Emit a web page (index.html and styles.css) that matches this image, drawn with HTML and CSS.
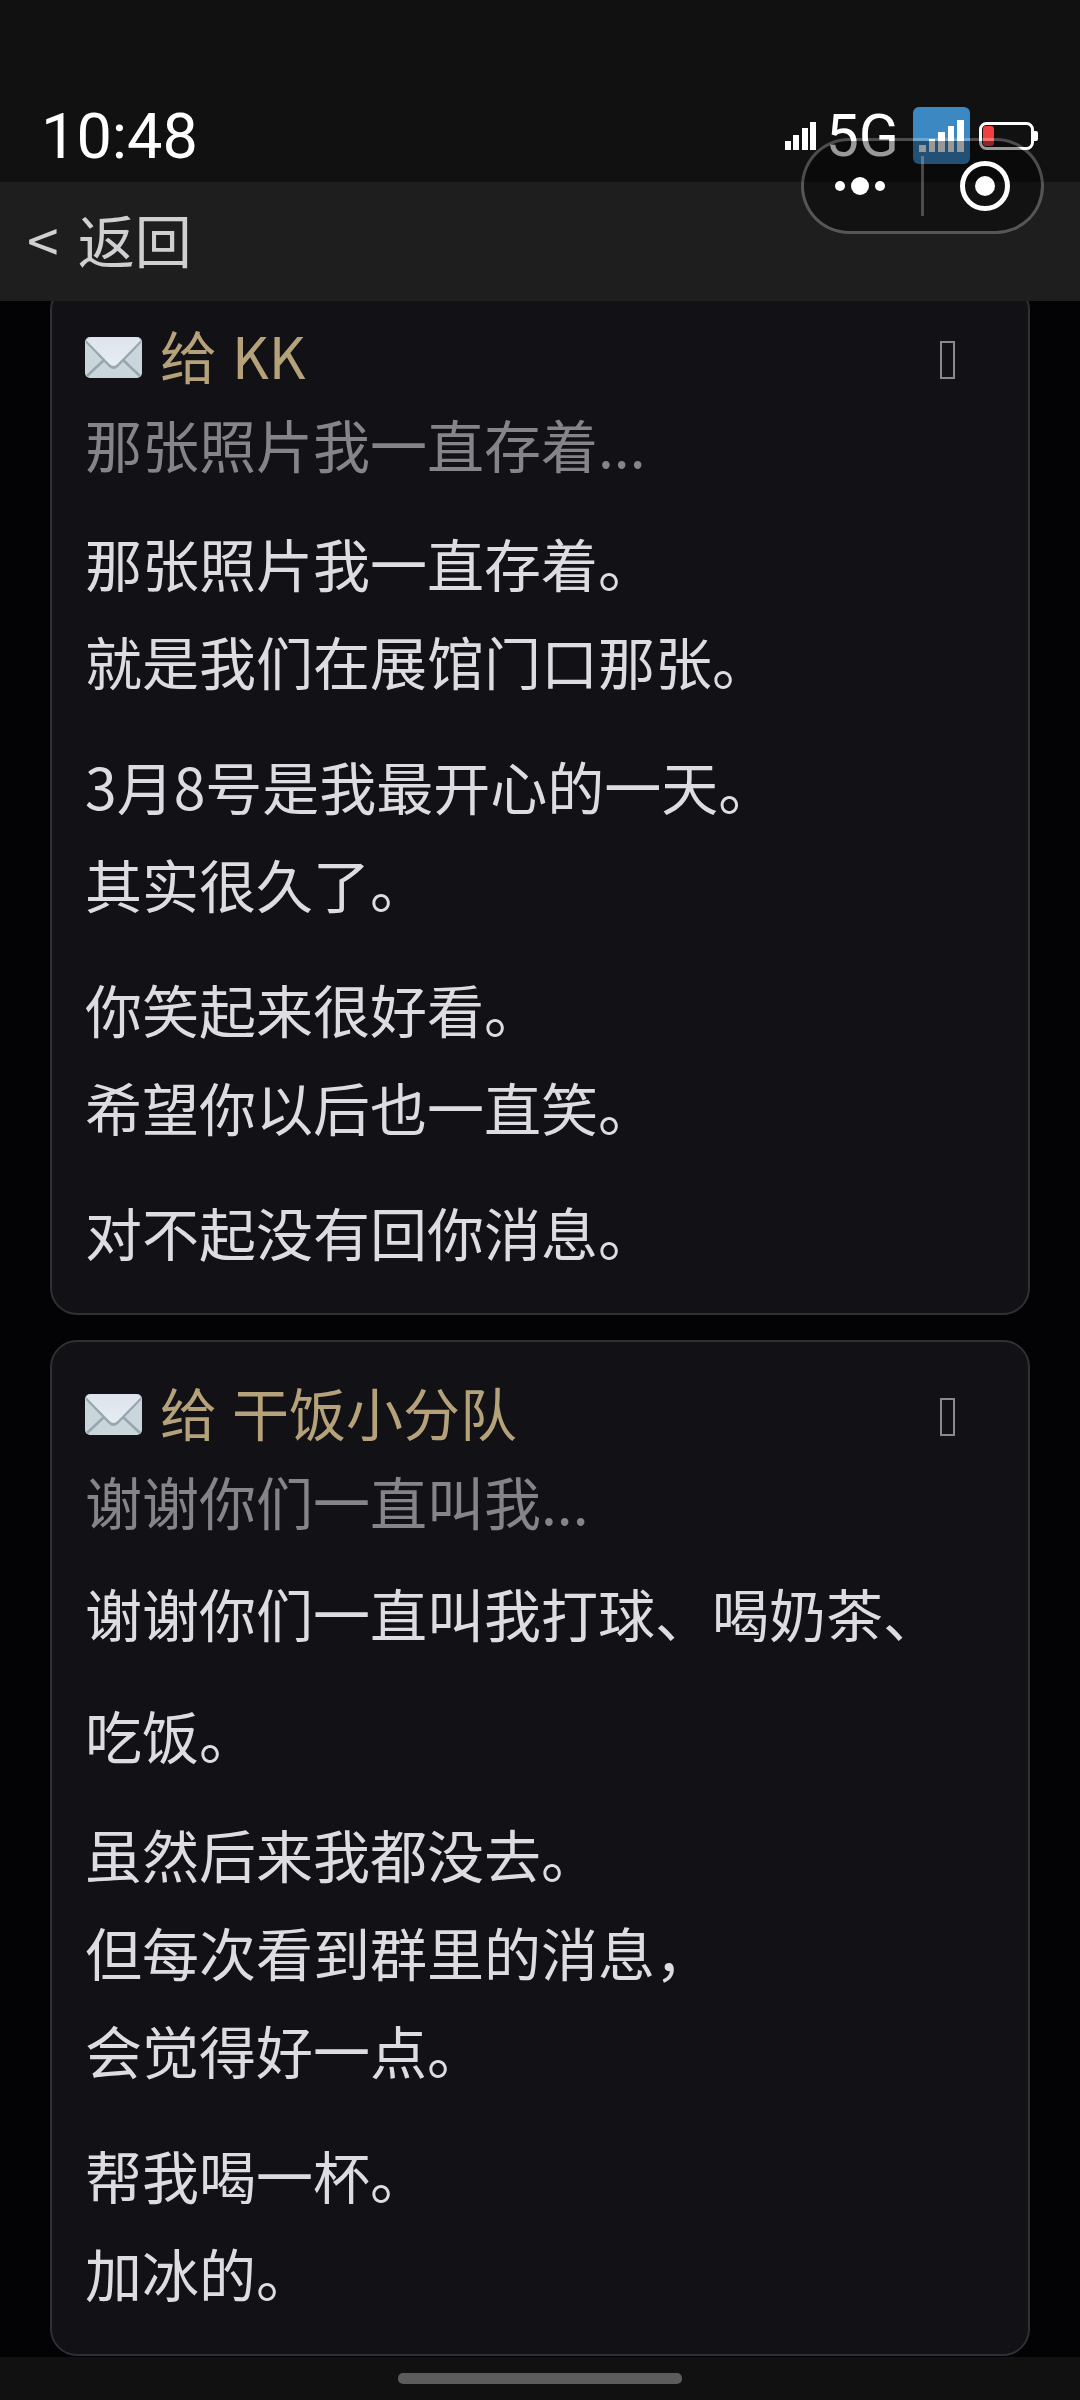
FILE: index.html
```
<!DOCTYPE html>
<html lang="zh-CN">
  <head>
    <meta charset="UTF-8" />
    <meta name="viewport" content="width=device-width, initial-scale=1.0" />
    <title>信件</title>
    <link rel="stylesheet" href="styles.css" />
  </head>
  <body>
    <svg class="defs" aria-hidden="true">
      <linearGradient id="flap" x1="0" y1="0" x2="0" y2="1">
        <stop offset="0" stop-color="#dfe3ed" />
        <stop offset="1" stop-color="#e6edf2" />
      </linearGradient>
      <symbol id="envelope" viewBox="0 0 57 41">
        <rect width="57" height="41" rx="5" fill="#c9d6dc" />
        <path d="M2 39L19 23M55 39L38 23" stroke="#97a6af" stroke-width="2.5" />
        <path d="M1 6L24 30Q28.500 34 33 30L56 6V5Q56 0 51 0H6Q1 0 1 5Z" fill="#97a6af" />
        <path d="M1 3L24.500 27Q28.500 31 32.500 27L56 3Q54 0 51 0H6Q3 0 1 3Z" fill="url(#flap)" />
      </symbol>
    </svg>

    <div class="top">
      <!-- Status bar -->
      <div class="status-bar">
        <span class="time">10:48</span>
        <div class="status-icons">
          <svg class="signal" width="31" height="28" viewBox="0 0 31 28" fill="#fff">
            <path d="M0 19h6v9H0zM8 13h6v15H8zM17 6h6v22h-6zM25 0h6v28h-6z" />
          </svg>
          <span class="network">5G</span>
          <svg class="sim" width="57" height="57" viewBox="0 0 57 57">
            <rect width="57" height="57" rx="6" fill="#3b88c3" />
            <path d="M6 38h7v7H6zM16 32h6v13h-6zM25 25h7v20h-7zM35 19h6v26h-6zM44 13h7v32h-7z" fill="#fff" />
          </svg>
          <svg class="battery" width="59" height="28" viewBox="0 0 59 28">
            <rect x="1.500" y="1.500" width="52" height="25" rx="6" fill="none" stroke="#fff" stroke-width="3" />
            <rect x="4" y="4" width="11" height="20" rx="3" fill="#f04040" />
            <path d="M55 9h2q2 0 2 2v6q0 2-2 2h-2z" fill="#fff" />
          </svg>
        </div>
      </div>

      <!-- Nav bar -->
      <header class="nav-bar">
        <a href="#" class="back"><span>&lt;</span><span>返回</span></a>
      </header>

      <!-- Mini program capsule -->
      <div class="capsule">
        <button type="button" class="more" aria-label="更多">
          <svg width="50" height="18" viewBox="0 0 50 18" fill="#fff">
            <circle cx="5" cy="9" r="5" />
            <circle cx="25" cy="9" r="9" />
            <circle cx="45" cy="9" r="5" />
          </svg>
        </button>
        <span class="divider"></span>
        <button type="button" class="close" aria-label="关闭">
          <svg width="50" height="50" viewBox="0 0 50 50">
            <circle cx="25" cy="25" r="22.500" fill="none" stroke="#fff" stroke-width="5" />
            <circle cx="25" cy="25" r="10" fill="#fff" />
          </svg>
        </button>
      </div>
    </div>

    <main class="letters">
      <article class="letter">
        <div class="letter-head">
          <svg class="mail"><use href="#envelope" /></svg>
          <h2><span>给</span><span>KK</span></h2>
          <button type="button" class="letter-action" aria-label="收起"></button>
        </div>
        <p class="preview">那张照片我一直存着...</p>
        <div class="letter-body">
          <p>那张照片我一直存着。<br />就是我们在展馆门口那张。</p>
          <p>3月8号是我最开心的一天。<br />其实很久了。</p>
          <p>你笑起来很好看。<br />希望你以后也一直笑。</p>
          <p>对不起没有回你消息。</p>
        </div>
      </article>

      <article class="letter">
        <div class="letter-head">
          <svg class="mail"><use href="#envelope" /></svg>
          <h2><span>给</span><span>干饭小分队</span></h2>
          <button type="button" class="letter-action" aria-label="收起"></button>
        </div>
        <p class="preview">谢谢你们一直叫我...</p>
        <div class="letter-body">
          <p class="loose">谢谢你们一直叫我打球、喝奶茶、吃饭。</p>
          <p>虽然后来我都没去。<br />但每次看到群里的消息，<br />会觉得好一点。</p>
          <p>帮我喝一杯。<br />加冰的。</p>
        </div>
      </article>
    </main>

    <div class="home-bar"><span></span></div>
  </body>
</html>
```
FILE: styles.css
```
* {
  box-sizing: border-box;
}

body {
  margin: 0;
  background: #030306;
  color: #dddde1;
  font-family: "Noto Sans CJK SC", sans-serif;
  font-size: 57px;
}

h2,
p {
  margin: 0;
  font-size: 57px;
  font-weight: 400;
}

button {
  padding: 0;
  border: none;
  background: none;
  cursor: pointer;
}

svg {
  display: block;
  flex: none;
}

.defs {
  position: absolute;
  width: 0;
  height: 0;
}

/* top bars */
.top {
  position: fixed;
  top: 0;
  left: 0;
  right: 0;
  z-index: 1;
}

.status-bar {
  display: flex;
  justify-content: space-between;
  align-items: flex-end;
  height: 182px;
  padding: 0 42px 18px 41px;
  background: #111;
  color: #fff;
  font-family: Roboto, sans-serif;
}

.time {
  font-size: 63px;
  line-height: 54px;
}

.status-icons {
  display: flex;
  align-items: center;
}

.network {
  margin: 0 14px 0 10px;
  font-size: 59px;
  line-height: 57px;
}

.battery {
  margin-left: 9px;
}

.nav-bar {
  display: flex;
  align-items: center;
  height: 119px;
  padding: 0 27px 7px;
  background: #1e1e1e;
}

.back {
  display: flex;
  gap: 19px;
  color: #d0d0d3;
  line-height: 90px;
  text-decoration: none;
}

.capsule {
  position: absolute;
  top: 138px;
  right: 36px;
  display: flex;
  align-items: center;
  width: 243px;
  height: 96px;
  border: 3px solid rgba(255, 255, 255, 0.25);
  border-radius: 48px;
  background: rgba(0, 0, 0, 0.4);
  background-clip: padding-box;
}

.capsule button {
  display: flex;
  flex: 1;
  justify-content: center;
}

.capsule .more {
  padding-right: 5px;
}

.capsule .close {
  padding-left: 5px;
}

.divider {
  width: 3px;
  height: 60px;
  background: rgba(255, 255, 255, 0.25);
}

/* letters */
.letters {
  display: flex;
  flex-direction: column;
  gap: 25px;
  padding: 283px 50px 44px;
}

.letter {
  padding: 24px 33px 33px;
  border: 2px solid #303034;
  border-radius: 27px;
  background: #121116;
}

.letter-head {
  display: flex;
  align-items: center;
  height: 90px;
}

.mail {
  width: 57px;
  height: 41px;
  margin-top: 7px;
}

.letter-head h2 {
  display: flex;
  gap: 15px;
  margin-left: 18px;
  color: #b5a27a;
  line-height: 90px;
}

.letter-action {
  width: 15px;
  height: 38px;
  margin: 12px 40px 0 auto;
  border: 2px solid #8a8a8e;
}

.preview {
  color: #858489;
  line-height: 89px;
}

.letter-body {
  line-height: 98px;
}

.letter-body p {
  margin-top: 27px;
}

.letter-body p:first-child {
  margin-top: 25px;
}

.letter-body p.loose {
  margin-top: 6px;
  line-height: 122px;
}

.letter-body .loose + p {
  margin-top: 9px;
}

/* home indicator */
.home-bar {
  position: fixed;
  bottom: 0;
  left: 0;
  right: 0;
  display: flex;
  justify-content: center;
  align-items: center;
  height: 43px;
  background: #111;
}

.home-bar span {
  width: 284px;
  height: 11px;
  border-radius: 5px;
  background: #5c5c5c;
}
```
